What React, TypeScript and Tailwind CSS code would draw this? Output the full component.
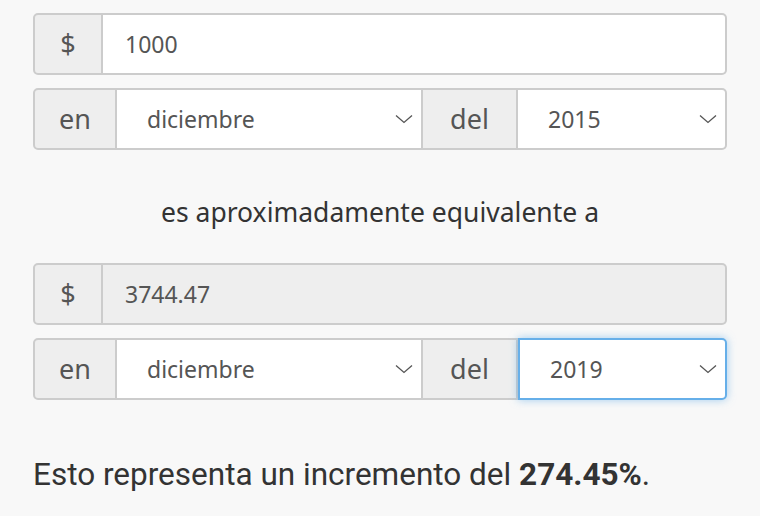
import React from 'react';

const Chevron = () => (
  <svg width="18" height="10" viewBox="0 0 18 10" fill="none" className="shrink-0">
    <path d="M1 1.5 L9 8.5 L17 1.5" stroke="#555" strokeWidth="1.3" />
  </svg>
);

const Addon = ({ children, className = '' }: { children: React.ReactNode; className?: string }) => (
  <div className={`flex items-center justify-center bg-[#eeeeee] border-2 border-[#cccccc] text-[#555] text-[27px] ${className}`}>
    {children}
  </div>
);

const SelectBox = ({ value, className = '', focused = false }: { value: string; className?: string; focused?: boolean }) => (
  <div
    className={`flex items-center justify-between bg-white border-2 pl-[30px] pr-[8px] text-[23px] text-[#555] ${
      focused ? 'border-[#66afe9] shadow-[0_0_8px_rgba(102,175,233,0.6)] relative z-10' : 'border-[#cccccc]'
    } ${className}`}
  >
    <span>{value}</span>
    <Chevron />
  </div>
);

const DateRow = ({ year, focused = false }: { year: string; focused?: boolean }) => (
  <div className="flex h-[62px]">
    <Addon className="w-[84px] rounded-l-[5px]">en</Addon>
    <SelectBox value="diciembre" className="w-[306px] border-l-0" />
    <Addon className="w-[95px] border-l-0">del</Addon>
    <SelectBox value={year} focused={focused} className={`flex-1 rounded-r-[5px] ${focused ? '' : 'border-l-0'}`} />
  </div>
);

const AmountRow = ({ value, readOnly = false }: { value: string; readOnly?: boolean }) => (
  <div className="flex h-[62px]">
    <Addon className="w-[70px] rounded-l-[5px]">$</Addon>
    <div
      className={`flex-1 flex items-center border-2 border-l-0 border-[#cccccc] rounded-r-[5px] pl-[22px] text-[23px] text-[#555] ${
        readOnly ? 'bg-[#eeeeee]' : 'bg-white'
      }`}
    >
      {value}
    </div>
  </div>
);

export default function App() {
  return (
    <div className="w-[760px] h-[516px] bg-[#f8f8f8] px-[33px] pt-[13px] overflow-hidden" style={{ fontFamily: '"Noto Sans", "Open Sans", sans-serif' }}>
      <AmountRow value="1000" />
      <div className="mt-[13px]">
        <DateRow year="2015" />
      </div>
      <p className="text-center text-[26.5px] text-[#333] mt-[45px] leading-[34px]">es aproximadamente equivalente a</p>
      <div className="mt-[34px]">
        <AmountRow value="3744.47" readOnly />
      </div>
      <div className="mt-[13px]">
        <DateRow year="2019" focused />
      </div>
      <p className="text-[31.5px] text-[#333] mt-[57px] leading-[36px]" style={{ fontFamily: 'Roboto, sans-serif' }}>
        Esto representa un incremento del <b className="font-bold">274.45%</b>.
      </p>
    </div>
  );
}
